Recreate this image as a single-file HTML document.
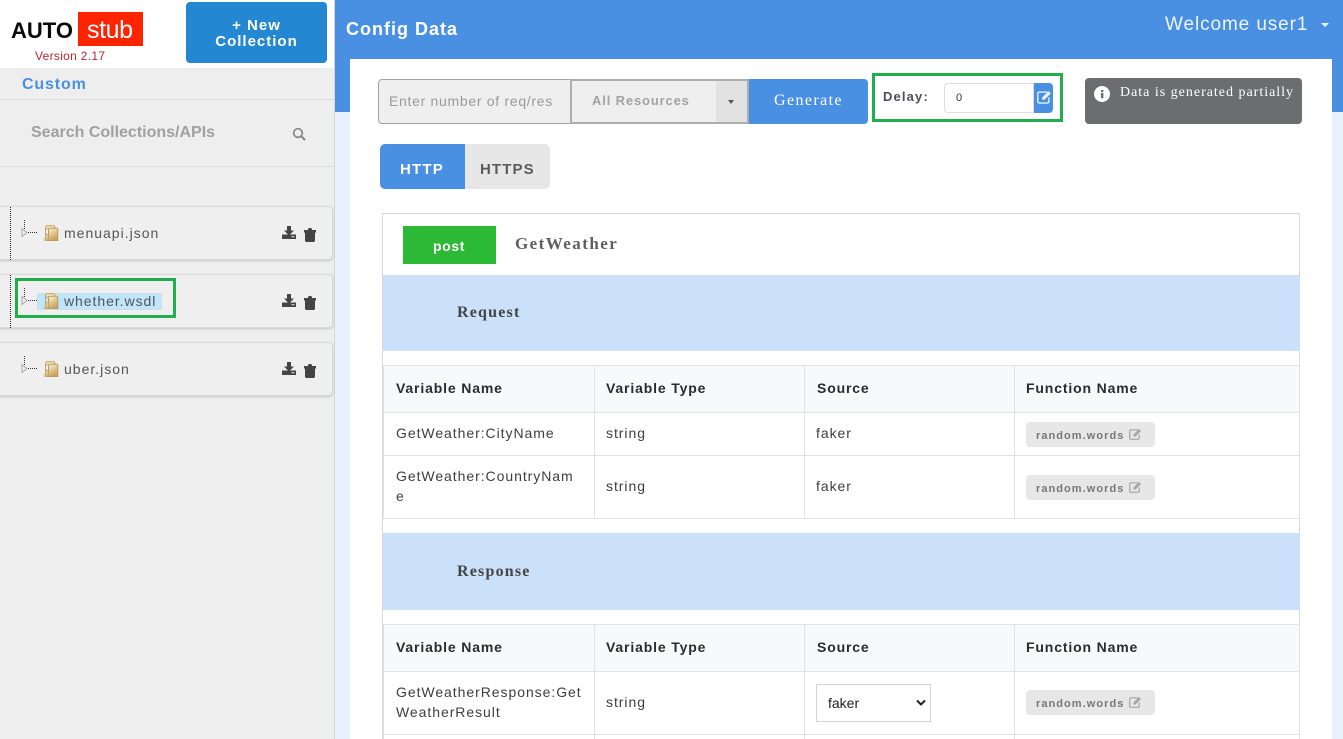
<!DOCTYPE html>
<html><head><meta charset="utf-8"><title>Config Data</title>
<style>
html,body{margin:0;padding:0;width:1343px;height:739px;overflow:hidden;background:#e8f2fd;font-family:"Liberation Sans",sans-serif}
#w{position:relative;width:1343px;height:739px;overflow:hidden}
.a{position:absolute}
.t{position:absolute;white-space:nowrap;line-height:1}
.card{position:absolute;left:-4px;width:337px;height:54px;background:#efefef;border:1px solid #d8d8d8;border-radius:4px;box-shadow:0 1px 2px #c4c4c4;box-sizing:border-box}
.n{font-size:14px;letter-spacing:1px;color:#555}
.th{font-size:14px;font-weight:bold;letter-spacing:.85px;color:#2b2b2b}
.td{font-size:14px;letter-spacing:.95px;color:#3e3e3e}
.pill{position:absolute;left:1026px;width:129px;height:25px;background:#e7e7e7;border-radius:4px}
.pill span{position:absolute;left:10px;top:8px;font-size:11px;line-height:12px;font-weight:bold;letter-spacing:1.05px;color:#777;white-space:nowrap}
.pill svg{position:absolute;left:103px;top:6px}
.line{position:absolute;background:#e2e2e2}
</style></head><body><div id="w">

<!-- header/main -->
<div class="a" style="left:335px;top:0;width:1008px;height:112px;background:#4a90e2"></div>
<div class="a" style="left:350px;top:59px;width:982px;height:680px;background:#fff"></div>
<div class="t" style="left:346px;top:20px;font-size:18px;font-weight:bold;letter-spacing:1px;color:#fff">Config Data</div>
<div class="t" style="left:1165px;top:15px;font-size:19px;letter-spacing:.9px;color:#eef4fd">Welcome user1</div>
<div class="a" style="left:1321px;top:23px;border-left:4px solid transparent;border-right:4px solid transparent;border-top:4px solid #eef4fd"></div>

<!-- sidebar -->
<div class="a" style="left:0;top:0;width:334px;height:739px;background:#eee;border-right:1px solid #d6d6d6"></div>
<div class="a" style="left:0;top:0;width:334px;height:68px;background:#fff"></div>
<div class="t" style="left:11px;top:20px;font-size:22px;font-weight:bold;color:#0a0a0a;letter-spacing:0">AUTO</div>
<div class="a" style="left:78px;top:12px;width:65px;height:34px;background:#ff2400"></div>
<div class="t" style="left:87px;top:18px;font-size:25px;color:#fff;letter-spacing:-.4px">stub</div>
<div class="t" style="left:35px;top:50px;font-size:12px;letter-spacing:.3px;color:#b5292f">Version 2.17</div>
<div class="a" style="left:186px;top:2px;width:141px;height:61px;background:#2487d1;border-radius:4px"></div>
<div class="t" style="left:186px;top:18px;width:141px;text-align:center;font-size:15px;line-height:16px;font-weight:bold;letter-spacing:1px;color:#fff;white-space:normal">+ New<br>Collection</div>
<div class="t" style="left:22px;top:77px;font-size:16px;font-weight:bold;letter-spacing:.85px;color:#4a90e2">Custom</div>
<div class="a" style="left:0;top:99px;width:334px;height:1px;background:#dcdcdc"></div>
<div class="t" style="left:31px;top:125px;font-size:16px;font-weight:bold;color:#a0a0a0;letter-spacing:0">Search Collections/APIs</div>
<svg class="a" style="left:292px;top:127px" width="14" height="14" viewBox="0 0 14 14"><circle cx="6" cy="6" r="4.3" fill="none" stroke="#858585" stroke-width="1.7"/><path d="M9.2 9.2L13 13" stroke="#858585" stroke-width="2"/></svg>
<div class="a" style="left:0;top:166px;width:334px;height:1px;background:#dcdcdc"></div>

<div class="card" style="top:206px"></div>
<div class="card" style="top:274px"></div>
<div class="card" style="top:342px"></div>
<div class="a" style="left:10px;top:207px;height:53px;border-left:1px dotted #222"></div>
<div class="a" style="left:10px;top:275px;height:53px;border-left:1px dotted #222"></div>

<svg width="0" height="0" style="position:absolute"><defs>
<linearGradient id="f" x1="0" y1="0" x2="0.4" y2="1"><stop offset="0" stop-color="#fbf2d6"/><stop offset="1" stop-color="#c9a35c"/></linearGradient>
<linearGradient id="g" x1="0" y1="0" x2="0" y2="1"><stop offset="0" stop-color="#efdca6"/><stop offset="1" stop-color="#cfae6a"/></linearGradient>
<g id="tree"><path d="M3.5 0V10" stroke="#333" stroke-dasharray="1 1" fill="none"/><path d="M7 12.5H16" stroke="#333" stroke-dasharray="1 1" fill="none"/><path d="M1 8.5L6 12.5L1 16.5Z" fill="#eee" stroke="#aaa"/></g>
<g id="fold"><path d="M3.5 13V2L4.5 .7H12L13 2V4H3.5Z" fill="#f4e6bb" stroke="#c2a263" stroke-width="1"/><path d="M6.5 15.5V4.3L7.5 3.2H15L15.8 4V15.5Z" fill="url(#f)" stroke="#bb9a58" stroke-width="1"/><path d="M3.5 15.5V9.5H6.5V15.5Z" fill="url(#g)" stroke="#c2a263" stroke-width=".9"/><path d="M1.5 13.5h2v2.2h-2Z" fill="#c9c6bd"/></g>
<g id="dl"><path d="M5 0H9V4.5H12L7 9.5L2 4.5H5Z" fill="#444"/><path d="M0 8.5H14V13H0Z" fill="#444"/><path d="M9.5 10.7H12.5" stroke="#efefef" stroke-width="1"/></g>
<g id="tr"><path d="M0 2H4V.8L5 0H7L8 .8V2H12V4.5H11V13L10 14H2L1 13V4.5H0Z" fill="#444"/></g>
<g id="ed"><path d="M9 1.8H2.2Q.7 1.8.7 3.3V9.8Q.7 11.3 2.2 11.3H8.8Q10.3 11.3 10.3 9.8V6.5" fill="none" stroke="currentColor" stroke-width="1.2"/><path d="M4.5 6.5L10 1L12 3L6.5 8.5H4.5Z" fill="currentColor"/></g>
</defs></svg>

<svg class="a" style="left:21px;top:220px" width="20" height="20"><use href="#tree"/></svg>
<svg class="a" style="left:42px;top:225px" width="17" height="17"><use href="#fold"/></svg>
<div class="t n" style="left:64px;top:226px">menuapi.json</div>
<svg class="a" style="left:282px;top:226px" width="14" height="14"><use href="#dl"/></svg>
<svg class="a" style="left:304px;top:228px" width="12" height="14"><use href="#tr"/></svg>

<div class="a" style="left:37px;top:293px;width:123px;height:15px;background:#bfe6fb;border:1px solid #c9dfe9;box-sizing:content-box"></div>
<svg class="a" style="left:21px;top:288px" width="20" height="20"><use href="#tree"/></svg>
<svg class="a" style="left:42px;top:293px" width="17" height="17"><use href="#fold"/></svg>
<div class="t n" style="left:64px;top:294px;letter-spacing:.95px">whether.wsdl</div>
<svg class="a" style="left:282px;top:294px" width="14" height="14"><use href="#dl"/></svg>
<svg class="a" style="left:304px;top:296px" width="12" height="14"><use href="#tr"/></svg>
<div class="a" style="left:15px;top:278px;width:161px;height:40px;border:3px solid #22ad4e;box-sizing:border-box"></div>

<svg class="a" style="left:21px;top:356px" width="20" height="20"><use href="#tree"/></svg>
<svg class="a" style="left:42px;top:361px" width="17" height="17"><use href="#fold"/></svg>
<div class="t n" style="left:64px;top:362px">uber.json</div>
<svg class="a" style="left:282px;top:362px" width="14" height="14"><use href="#dl"/></svg>
<svg class="a" style="left:304px;top:364px" width="12" height="14"><use href="#tr"/></svg>

<!-- toolbar -->
<div class="a" style="left:378px;top:79px;width:193px;height:45px;background:#efefef;border:1px solid #a2a2a2;border-radius:4px 0 0 4px;box-sizing:border-box"></div>
<div class="t" style="left:389px;top:94px;font-size:14px;letter-spacing:.7px;color:#9a9a9a">Enter number of req/res</div>
<div class="a" style="left:570px;top:79px;width:179px;height:45px;background:#efefef;border:2px solid #adadad;box-sizing:border-box"></div>
<div class="a" style="left:716px;top:81px;width:31px;height:41px;background:#e2e2e2"></div>
<div class="a" style="left:728px;top:100px;border-left:3.5px solid transparent;border-right:3.5px solid transparent;border-top:4px solid #555"></div>
<div class="t" style="left:592px;top:94px;font-size:13px;font-weight:bold;letter-spacing:.85px;color:#a3a3a3">All Resources</div>
<div class="a" style="left:749px;top:79px;width:119px;height:45px;background:#4a90e2;border-radius:0 4px 4px 0"></div>
<div class="t" style="left:774px;top:93px;font-family:'Liberation Serif',serif;font-size:16px;letter-spacing:1.4px;color:#fff">Generate</div>

<div class="a" style="left:872px;top:73px;width:191px;height:49px;border:3px solid #22ad4e;box-sizing:border-box"></div>
<div class="t" style="left:883px;top:90px;font-size:13px;font-weight:bold;letter-spacing:1.15px;color:#4d4d57">Delay:</div>
<div class="a" style="left:944px;top:83px;width:90px;height:30px;background:#fff;border:1px solid #ddd;border-radius:4px 0 0 4px;box-sizing:border-box"></div>
<div class="t" style="left:956px;top:93px;font-size:11px;color:#333">0</div>
<div class="a" style="left:1034px;top:83px;width:19px;height:30px;background:#4a90e2;border-radius:0 4px 4px 0"></div>
<svg class="a" style="left:1037px;top:90px;color:#e8f1fc" width="15" height="15" viewBox="0 0 13 13"><use href="#ed"/></svg>

<div class="a" style="left:1085px;top:78px;width:217px;height:46px;background:#6c6d6f;border-radius:4px"></div>
<svg class="a" style="left:1094px;top:86px" width="16" height="16"><circle cx="8" cy="8" r="8" fill="#fff"/><rect x="7" y="7" width="2.4" height="5.2" fill="#6c6d6f"/><rect x="7" y="4" width="2.4" height="2" fill="#6c6d6f"/></svg>
<div class="t" style="left:1120px;top:86px;font-family:'Liberation Serif',serif;font-size:14px;letter-spacing:.99px;color:#fff">Data is generated partially</div>

<!-- tabs -->
<div class="a" style="left:380px;top:144px;width:85px;height:45px;background:#4a90e2;border-radius:5px 0 0 5px"></div>
<div class="a" style="left:465px;top:144px;width:85px;height:45px;background:#e7e7e7;border-radius:0 5px 5px 0"></div>
<div class="t" style="left:400px;top:162px;font-size:15px;font-weight:bold;letter-spacing:1.2px;color:#fff">HTTP</div>
<div class="t" style="left:480px;top:162px;font-size:15px;font-weight:bold;letter-spacing:1.1px;color:#5b5b5b">HTTPS</div>

<!-- panel -->
<div class="a" style="left:382px;top:213px;width:918px;height:540px;border:1px solid #d8d8d8;box-sizing:border-box"></div>
<div class="a" style="left:403px;top:226px;width:93px;height:38px;background:#2bb936"></div>
<div class="t" style="left:433px;top:239px;font-size:14px;font-weight:bold;letter-spacing:.6px;color:#fff">post</div>
<div class="t" style="left:515px;top:235px;font-family:'Liberation Serif',serif;font-weight:bold;font-size:17px;letter-spacing:1.45px;color:#5f5f5f">GetWeather</div>

<div class="a" style="left:383px;top:275px;width:917px;height:76px;background:#cbe1f9"></div>
<div class="t" style="left:457px;top:305px;font-family:'Liberation Serif',serif;font-weight:bold;font-size:16px;letter-spacing:1.2px;color:#444">Request</div>
<div class="a" style="left:383px;top:533px;width:917px;height:77px;background:#cbe1f9"></div>
<div class="t" style="left:457px;top:564px;font-family:'Liberation Serif',serif;font-weight:bold;font-size:16px;letter-spacing:1.2px;color:#444">Response</div>

<!-- table 1 -->
<div class="a" style="left:384px;top:366px;width:915px;height:46px;background:#f8f9fb"></div>
<div class="line" style="left:383px;top:365px;width:916px;height:1px"></div>
<div class="line" style="left:383px;top:412px;width:916px;height:1px"></div>
<div class="line" style="left:383px;top:455px;width:916px;height:1px"></div>
<div class="line" style="left:383px;top:518px;width:916px;height:1px"></div>
<div class="line" style="left:383px;top:365px;width:1px;height:154px"></div>
<div class="line" style="left:594px;top:365px;width:1px;height:154px"></div>
<div class="line" style="left:804px;top:365px;width:1px;height:154px"></div>
<div class="line" style="left:1014px;top:365px;width:1px;height:154px"></div>
<div class="line" style="left:1299px;top:365px;width:1px;height:154px"></div>
<div class="t th" style="left:396px;top:381px">Variable Name</div>
<div class="t th" style="left:606px;top:381px">Variable Type</div>
<div class="t th" style="left:817px;top:381px">Source</div>
<div class="t th" style="left:1026px;top:381px">Function Name</div>
<div class="t td" style="left:396px;top:426px">GetWeather:CityName</div>
<div class="t td" style="left:606px;top:426px">string</div>
<div class="t td" style="left:816px;top:426px">faker</div>
<div class="pill" style="top:422px"><span>random.words</span><svg width="13" height="13" style="color:#a5a5a5"><use href="#ed"/></svg></div>
<div class="t td" style="left:396px;top:466px;line-height:20px">GetWeather:CountryNam<br>e</div>
<div class="t td" style="left:606px;top:479px">string</div>
<div class="t td" style="left:816px;top:479px">faker</div>
<div class="pill" style="top:475px"><span>random.words</span><svg width="13" height="13" style="color:#a5a5a5"><use href="#ed"/></svg></div>

<!-- table 2 -->
<div class="a" style="left:384px;top:625px;width:915px;height:46px;background:#f8f9fb"></div>
<div class="line" style="left:383px;top:624px;width:916px;height:1px"></div>
<div class="line" style="left:383px;top:671px;width:916px;height:1px"></div>
<div class="line" style="left:383px;top:734px;width:916px;height:1px"></div>
<div class="line" style="left:383px;top:624px;width:1px;height:115px"></div>
<div class="line" style="left:594px;top:624px;width:1px;height:115px"></div>
<div class="line" style="left:804px;top:624px;width:1px;height:115px"></div>
<div class="line" style="left:1014px;top:624px;width:1px;height:115px"></div>
<div class="line" style="left:1299px;top:624px;width:1px;height:115px"></div>
<div class="t th" style="left:396px;top:640px">Variable Name</div>
<div class="t th" style="left:606px;top:640px">Variable Type</div>
<div class="t th" style="left:817px;top:640px">Source</div>
<div class="t th" style="left:1026px;top:640px">Function Name</div>
<div class="t td" style="left:396px;top:682px;line-height:20px">GetWeatherResponse:Get<br>WeatherResult</div>
<div class="t td" style="left:606px;top:695px">string</div>
<div class="a" style="left:816px;top:684px;width:115px;height:38px;background:#fff;border:1px solid #d4d4d4;box-sizing:border-box"></div>
<div class="t" style="left:828px;top:696px;font-size:14px;color:#222">faker</div>
<svg class="a" style="left:916px;top:699px" width="10" height="8"><path d="M1 1.5L5 5.5L9 1.5" fill="none" stroke="#222" stroke-width="2"/></svg>
<div class="pill" style="top:690px"><span>random.words</span><svg width="13" height="13" style="color:#a5a5a5"><use href="#ed"/></svg></div>

</div></body></html>
